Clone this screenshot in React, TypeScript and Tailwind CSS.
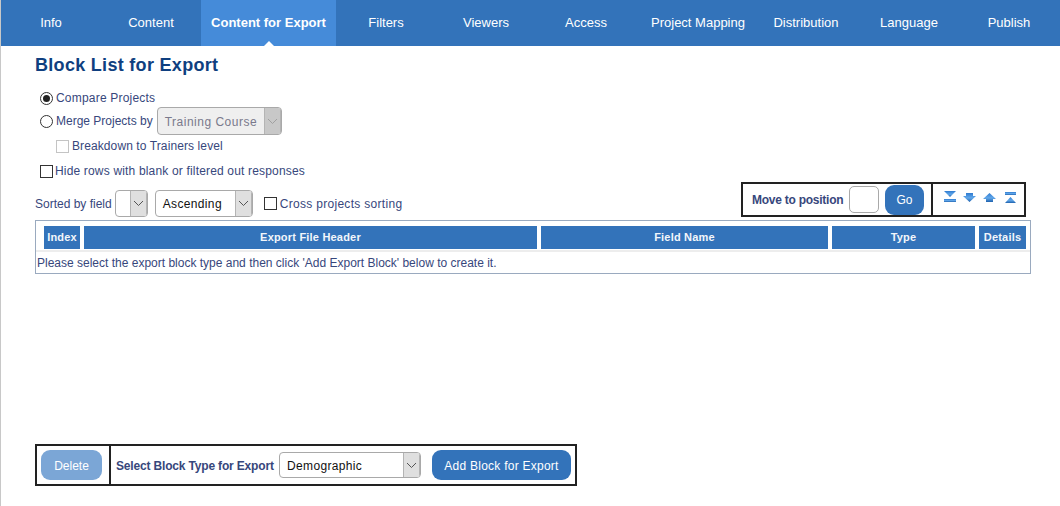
const tabs = [
  { label: "Info", w: "w-[100px]" },
  { label: "Content", w: "w-[100px]" },
  { label: "Content for Export", w: "w-[135px]", active: true },
  { label: "Filters", w: "w-[100px]" },
  { label: "Viewers", w: "w-[100px]" },
  { label: "Access", w: "w-[100px]" },
  { label: "Project Mapping", w: "w-[124px]" },
  { label: "Distribution", w: "w-[92px]" },
  { label: "Language", w: "w-[114px]" },
  { label: "Publish", w: "w-[86px]" },
]

const columns = ["Index", "Export File Header", "Field Name", "Type", "Details"]

function Chevron({ color = "#555" }: { color?: string }) {
  return (
    <svg width="11" height="7" viewBox="0 0 11 7" fill="none">
      <path d="M1 1l4.5 4.5L10 1" stroke={color} strokeWidth="1" />
    </svg>
  )
}

function Select({ value, className, disabled }: { value?: string; className: string; disabled?: boolean }) {
  return (
    <div
      className={`flex overflow-hidden rounded-[4px] border border-[#a9a9a9] ${disabled ? "bg-[#efefef] text-[#7a7a8c]" : "bg-white text-[#111]"} ${className}`}
    >
      <span className="flex-1 pl-[7px] pt-[1px] flex items-center whitespace-nowrap">{value}</span>
      <span className={`w-[17px] flex items-center justify-center border-l border-r border-[#b4b4b4] ${disabled ? "bg-[#c8c8c8]" : "bg-[#dfdfdf]"}`}>
        <Chevron color={disabled ? "#a0a0a0" : "#555"} />
      </span>
    </div>
  )
}

function Radio({ checked }: { checked?: boolean }) {
  return (
    <span className="w-[13px] h-[13px] rounded-full border border-[#333] bg-white flex items-center justify-center shrink-0">
      {checked && <span className="w-[7px] h-[7px] rounded-full bg-[#222]" />}
    </span>
  )
}

function Box({ faded }: { faded?: boolean }) {
  return <span className={`block w-[13px] h-[13px] shrink-0 border bg-white ${faded ? "border-[#c4c4c4]" : "border-[#333]"}`} />
}

function MoveIcon({ d, bar }: { d: string; bar?: { x: number; y: number; w: number } }) {
  return (
    <svg width="16" height="13" viewBox="0 0 16 13">
      <defs>
        <linearGradient id="moveBlue" x1="0" y1="0" x2="0" y2="1">
          <stop offset="0" stopColor="#2f7bd0" />
          <stop offset="0.55" stopColor="#62a8ea" />
          <stop offset="1" stopColor="#1f62ae" />
        </linearGradient>
      </defs>
      <path d={d} fill="url(#moveBlue)" />
      {bar && <rect x={bar.x} y={bar.y} width={bar.w} height="3" fill="url(#moveBlue)" />}
    </svg>
  )
}

export default function App() {
  return (
    <div className="h-[506px] w-[1060px] overflow-hidden border-l border-[#c8c8c8] bg-white font-['Liberation_Sans',Arial,sans-serif] text-[12px] text-[#37477c]">
      <nav className="flex h-[46px] bg-[#3373ba] text-[13px] text-white">
        {tabs.map((tab) => (
          <div
            key={tab.label}
            className={`relative flex items-center justify-center whitespace-nowrap ${tab.w} ${tab.active ? "bg-[#458bd9] font-bold" : ""}`}
          >
            {tab.label}
            {tab.active && (
              <span className="absolute bottom-0 left-1/2 -ml-[5px] border-x-[5px] border-b-[5px] border-x-transparent border-b-white" />
            )}
          </div>
        ))}
      </nav>

      <main className="w-[1030px] pl-[34px]">
        <h1 className="h-[22px] mt-[8px] text-[18px] leading-[22px] font-bold tracking-[0.3px] text-[#0f3f80]">Block List for Export</h1>

        <div className="mt-[14px] ml-[5px] h-[16px] flex items-center gap-[3px] tracking-[0.2px]">
          <Radio checked />
          <span>Compare Projects</span>
        </div>
        <div className="mt-[1px] ml-[5px] h-[28px] flex items-center gap-[3px]">
          <Radio />
          <span>Merge Projects by</span>
          <Select value="Training Course" disabled className="h-[28px] w-[125px] ml-[1px] tracking-[0.5px]" />
        </div>
        <div className="mt-[3px] ml-[21px] h-[16px] flex items-center gap-[3px] tracking-[0.1px]">
          <Box faded />
          <span>Breakdown to Trainers level</span>
        </div>
        <div className="mt-[9px] ml-[5px] h-[16px] flex items-center gap-[2px] tracking-[0.17px]">
          <Box />
          <span>Hide rows with blank or filtered out responses</span>
        </div>

        <div className="mt-[3px] h-[35px] flex items-end justify-between pr-[5px]">
          <div className="flex items-center h-[27px]">
            <span className="pt-[1px]">Sorted by field</span>
            <Select className="h-[27px] w-[33px] ml-[3px]" />
            <Select value="Ascending" className="h-[27px] w-[98px] ml-[7px] tracking-[0.35px]" />
            <span className="ml-[11px] mr-[3px]"><Box /></span>
            <span className="pt-[1px] tracking-[0.3px]">Cross projects sorting</span>
          </div>
          <div className="flex h-[35px] w-[285px] border-2 border-[#222]">
            <div className="w-[190px] flex items-center pl-[9px] border-r-2 border-[#222]">
              <span className="w-[92px] pt-[1px] font-bold tracking-[-0.25px] whitespace-nowrap">Move to position</span>
              <span className="ml-[5px] h-[27px] w-[30px] rounded-[5px] border border-[#a9a9a9] bg-white" />
              <button className="ml-[6px] h-[30px] w-[39px] pt-[1px] rounded-[9px] bg-[#3373ba] text-white">Go</button>
            </div>
            <div className="flex-1 flex items-start pt-[7px] pl-[11px] gap-[3px]">
              <MoveIcon d="M0 0h12L6 6z" bar={{ x: 0, y: 8, w: 12 }} />
              <MoveIcon d="M3 2h7v3h3L6.5 11 0 5h3z" />
              <MoveIcon d="M7.5 2L14 8h-3v3H4V8H1z" />
              <MoveIcon d="M9.5 6L15 12H4z" bar={{ x: 4, y: 1, w: 11 }} />
            </div>
          </div>
        </div>

        <div className="mt-[3px] h-[54px] w-[996px] border border-[#9aaabf]">
          <div className="h-[31px] pt-[5px] pl-[8px] pr-[4px] border-b-2 border-[#ededed] grid grid-cols-[36px_453px_287px_143px_47px] gap-x-[4px]">
            {columns.map((col) => (
              <div key={col} className="h-[23px] flex items-center justify-center bg-[#3373ba] text-[11px] font-bold tracking-[0.2px] text-[#f2f6fb]">
                {col}
              </div>
            ))}
          </div>
          <p className="pl-[1px] pt-[2px]">
            Please select the export block type and then click 'Add Export Block' below to create it.
          </p>
        </div>

        <div className="mt-[170px] h-[42px] w-[542px] flex border-2 border-[#222]">
          <div className="w-[74px] flex items-center pl-[4px] border-r-2 border-[#222]">
            <button className="h-[30px] w-[61px] pt-[2px] rounded-[9px] bg-[#7ba6d6] text-white">Delete</button>
          </div>
          <div className="flex items-center pl-[5px]">
            <span className="w-[158px] pt-[2px] shrink-0 font-bold tracking-[-0.17px] whitespace-nowrap">Select Block Type for Export</span>
            <Select value="Demographic" className="h-[26px] w-[142px] ml-[5px] tracking-[0.35px]" />
            <button className="ml-[11px] h-[30px] w-[139px] pt-[1px] shrink-0 rounded-[9px] bg-[#3373ba] tracking-[0.25px] text-white">Add Block for Export</button>
          </div>
        </div>
      </main>
    </div>
  )
}
